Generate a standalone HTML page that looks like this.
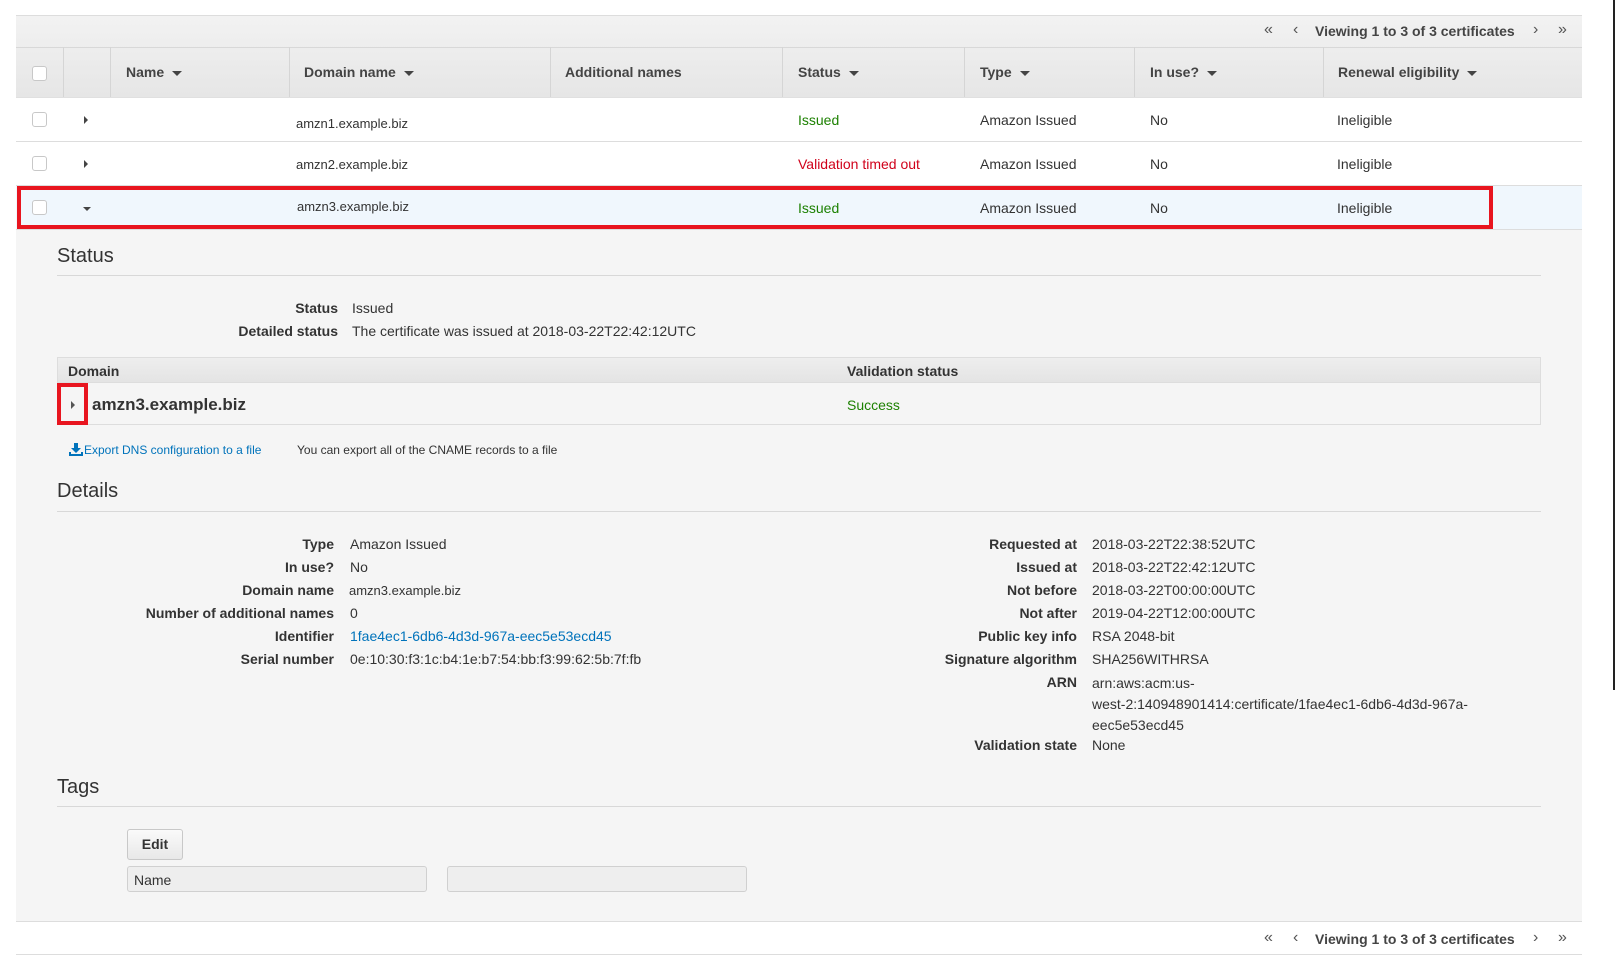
<!DOCTYPE html>
<html><head><meta charset="utf-8"><style>
*{box-sizing:border-box;margin:0;padding:0}
body{width:1617px;height:961px;background:#fff;font-family:"Liberation Sans",Arial,sans-serif;font-size:14px;color:#333;position:relative;overflow:hidden}
.a{position:absolute;white-space:nowrap}
.b{font-weight:bold}
.cb{position:absolute;width:15px;height:15px;border:1px solid #c8c8c8;border-radius:3px;background:#fff}
.hd{font-weight:bold;color:#444}
.car{display:inline-block;width:0;height:0;border-left:5px solid transparent;border-right:5px solid transparent;border-top:5px solid #444;margin-left:8px;vertical-align:middle}
.vl{position:absolute;top:47px;height:50px;width:1px;background:#d5d5d5}
.hl{position:absolute;height:1px;background:#ddd}
.green{color:#1d8102}.red{color:#d0021b}.link{color:#0073bb}
.lab{position:absolute;text-align:right;font-weight:bold;color:#333;white-space:nowrap}
.h2{position:absolute;font-size:20px;color:#333}
.pg{position:absolute;color:#555;font-size:16px}
</style></head><body>
<div class="hl" style="left:16px;top:15px;width:1566px;background:#ddd"></div>
<div class="a" style="left:16px;top:16px;width:1566px;height:81px;background:linear-gradient(#f2f2f2,#e6e6e6)"></div>
<div class="hl" style="left:16px;top:47px;width:1566px;background:#d8d8d8"></div>
<div class="pg" style="left:1264px;top:21px">«</div><div class="pg" style="left:1293px;top:21px">‹</div>
<div class="a b" style="left:1315px;top:23px;color:#444">Viewing 1 to 3 of 3 certificates</div>
<div class="pg" style="left:1533px;top:21px">›</div><div class="pg" style="left:1558px;top:21px">»</div>
<div class="vl" style="left:63px"></div><div class="vl" style="left:110px"></div><div class="vl" style="left:289px"></div><div class="vl" style="left:550px"></div><div class="vl" style="left:782px"></div><div class="vl" style="left:964px"></div><div class="vl" style="left:1134px"></div><div class="vl" style="left:1323px"></div>
<div class="cb" style="left:32px;top:66px"></div>
<div class="a hd" style="left:126px;top:64px">Name<span class="car"></span></div>
<div class="a hd" style="left:304px;top:64px">Domain name<span class="car"></span></div>
<div class="a hd" style="left:565px;top:64px">Additional names</div>
<div class="a hd" style="left:798px;top:64px">Status<span class="car"></span></div>
<div class="a hd" style="left:980px;top:64px">Type<span class="car"></span></div>
<div class="a hd" style="left:1150px;top:64px">In use?<span class="car"></span></div>
<div class="a hd" style="left:1338px;top:64px">Renewal eligibility<span class="car"></span></div>
<div class="hl" style="left:16px;top:97px;width:1566px;background:#e0e0e0"></div>
<div class="hl" style="left:16px;top:141px;width:1566px"></div>
<div class="hl" style="left:16px;top:185px;width:1566px"></div>
<div class="a" style="left:16px;top:186px;width:1566px;height:43px;background:#f0f7fd"></div>
<div class="hl" style="left:16px;top:229px;width:1566px"></div>
<div class="cb" style="left:32px;top:112px"></div><div class="a" style="left:84px;top:116px;border-top:4px solid transparent;border-bottom:4px solid transparent;border-left:4px solid #444"></div>
<div class="a" style="left:296px;top:116px;font-size:13px">amzn1.example.biz</div><div class="a green" style="left:798px;top:112px">Issued</div><div class="a" style="left:980px;top:112px">Amazon Issued</div><div class="a" style="left:1150px;top:112px">No</div><div class="a" style="left:1337px;top:112px">Ineligible</div>
<div class="cb" style="left:32px;top:156px"></div><div class="a" style="left:84px;top:160px;border-top:4px solid transparent;border-bottom:4px solid transparent;border-left:4px solid #444"></div>
<div class="a" style="left:296px;top:157px;font-size:13px">amzn2.example.biz</div><div class="a red" style="left:798px;top:156px">Validation timed out</div><div class="a" style="left:980px;top:156px">Amazon Issued</div><div class="a" style="left:1150px;top:156px">No</div><div class="a" style="left:1337px;top:156px">Ineligible</div>
<div class="cb" style="left:32px;top:200px"></div><div class="a" style="left:83px;top:207px;border-left:4px solid transparent;border-right:4px solid transparent;border-top:4px solid #444"></div>
<div class="a" style="left:297px;top:199px;font-size:13px">amzn3.example.biz</div><div class="a green" style="left:798px;top:200px">Issued</div><div class="a" style="left:980px;top:200px">Amazon Issued</div><div class="a" style="left:1150px;top:200px">No</div><div class="a" style="left:1337px;top:200px">Ineligible</div>
<div class="a" style="left:17px;top:186px;width:1476px;height:43px;border:4px solid #e8151f"></div>
<div class="a" style="left:16px;top:230px;width:1566px;height:691px;background:#f5f5f5"></div>
<div class="hl" style="left:16px;top:921px;width:1566px"></div>
<div class="h2" style="left:57px;top:245px">Status</div>
<div class="hl" style="left:57px;top:275px;width:1484px;background:#d8d8d8"></div>
<div class="lab" style="right:1279px;top:300px">Status</div><div class="a" style="left:352px;top:300px">Issued</div>
<div class="lab" style="right:1279px;top:323px">Detailed status</div><div class="a" style="left:352px;top:323px">The certificate was issued at 2018-03-22T22:42:12UTC</div>
<div class="a" style="left:57px;top:357px;width:1484px;height:68px;border:1px solid #ddd;background:#f5f5f5"></div>
<div class="a" style="left:58px;top:358px;width:1482px;height:25px;background:linear-gradient(#eee,#e4e4e4);border-bottom:1px solid #ddd"></div>
<div class="a b" style="left:68px;top:363px">Domain</div><div class="a b" style="left:847px;top:363px">Validation status</div>
<div class="a" style="left:71px;top:401px;border-top:4px solid transparent;border-bottom:4px solid transparent;border-left:4px solid #555"></div>
<div class="a b" style="left:92px;top:395px;font-size:17px">amzn3.example.biz</div>
<div class="a green" style="left:847px;top:397px">Success</div>
<div class="a" style="left:57px;top:383px;width:31px;height:42px;border:4px solid #e8151f"></div>
<svg class="a" style="left:69px;top:443px" width="14" height="13" viewBox="0 0 14 13"><path d="M5 0h4v5h3l-5 5-5-5h3z" fill="#0073bb"/><path d="M0 9v4h14V9h-2v2H2V9z" fill="#0073bb"/></svg>
<div class="a link" style="left:84px;top:443px;font-size:12px">Export DNS configuration to a file</div>
<div class="a" style="left:297px;top:443px;font-size:12px">You can export all of the CNAME records to a file</div>
<div class="h2" style="left:57px;top:480px">Details</div>
<div class="hl" style="left:57px;top:511px;width:1484px;background:#d8d8d8"></div>
<div class="lab" style="right:1283px;top:536px">Type</div><div class="a" style="left:350px;top:536px">Amazon Issued</div>
<div class="lab" style="right:1283px;top:559px">In use?</div><div class="a" style="left:350px;top:559px">No</div>
<div class="lab" style="right:1283px;top:582px">Domain name</div><div class="a" style="left:349px;top:583px;font-size:13px">amzn3.example.biz</div>
<div class="lab" style="right:1283px;top:605px">Number of additional names</div><div class="a" style="left:350px;top:605px">0</div>
<div class="lab" style="right:1283px;top:628px">Identifier</div><div class="a link" style="left:350px;top:628px">1fae4ec1-6db6-4d3d-967a-eec5e53ecd45</div>
<div class="lab" style="right:1283px;top:651px">Serial number</div><div class="a" style="left:350px;top:651px">0e:10:30:f3:1c:b4:1e:b7:54:bb:f3:99:62:5b:7f:fb</div>
<div class="lab" style="right:540px;top:536px">Requested at</div><div class="a" style="left:1092px;top:536px">2018-03-22T22:38:52UTC</div>
<div class="lab" style="right:540px;top:559px">Issued at</div><div class="a" style="left:1092px;top:559px">2018-03-22T22:42:12UTC</div>
<div class="lab" style="right:540px;top:582px">Not before</div><div class="a" style="left:1092px;top:582px">2018-03-22T00:00:00UTC</div>
<div class="lab" style="right:540px;top:605px">Not after</div><div class="a" style="left:1092px;top:605px">2019-04-22T12:00:00UTC</div>
<div class="lab" style="right:540px;top:628px">Public key info</div><div class="a" style="left:1092px;top:628px">RSA 2048-bit</div>
<div class="lab" style="right:540px;top:651px">Signature algorithm</div><div class="a" style="left:1092px;top:651px">SHA256WITHRSA</div>
<div class="lab" style="right:540px;top:674px">ARN</div>
<div class="a" style="left:1092px;top:673px;line-height:21px">arn:aws:acm:us-<br>west-2:140948901414:certificate/1fae4ec1-6db6-4d3d-967a-<br>eec5e53ecd45</div>
<div class="lab" style="right:540px;top:737px">Validation state</div><div class="a" style="left:1092px;top:737px">None</div>
<div class="h2" style="left:57px;top:776px">Tags</div>
<div class="hl" style="left:57px;top:806px;width:1484px;background:#d8d8d8"></div>
<div class="a b" style="left:127px;top:829px;width:56px;height:31px;border:1px solid #c8c8c8;border-radius:3px;background:linear-gradient(#fafafa,#e8e8e8);text-align:center;line-height:29px">Edit</div>
<div class="a" style="left:127px;top:866px;width:300px;height:26px;border:1px solid #d0d0d0;border-radius:3px;background:#eee;padding:5px 6px">Name</div>
<div class="a" style="left:447px;top:866px;width:300px;height:26px;border:1px solid #d0d0d0;border-radius:3px;background:#eee"></div>
<div class="hl" style="left:16px;top:954px;width:1566px"></div>
<div class="pg" style="left:1264px;top:929px">«</div><div class="pg" style="left:1293px;top:929px">‹</div>
<div class="a b" style="left:1315px;top:931px;color:#444">Viewing 1 to 3 of 3 certificates</div>
<div class="pg" style="left:1533px;top:929px">›</div><div class="pg" style="left:1558px;top:929px">»</div>
<div class="a" style="left:1613px;top:0;width:2px;height:690px;background:#222"></div>
</body></html>
